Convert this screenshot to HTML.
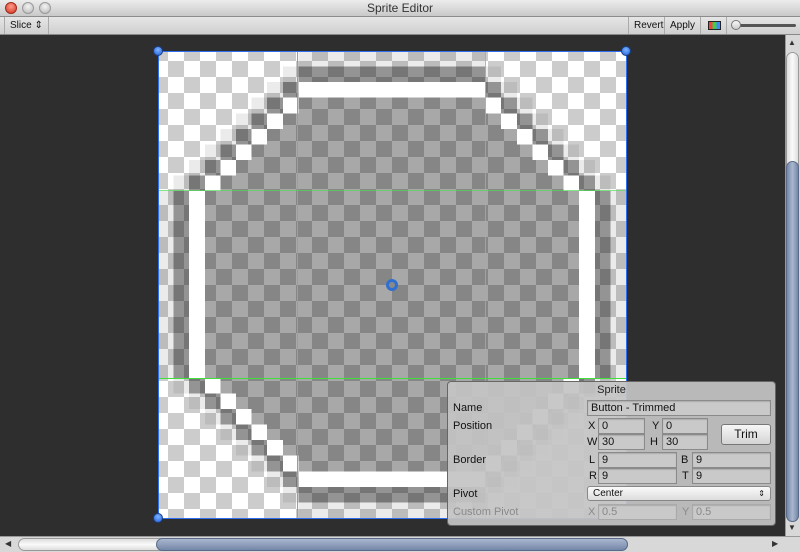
<!DOCTYPE html>
<html><head><meta charset="utf-8"><style>
*{margin:0;padding:0;box-sizing:border-box}
body{width:800px;height:552px;overflow:hidden;background:#2e2e2e;font-family:"Liberation Sans",sans-serif;position:relative}
.abs{position:absolute}
#title{left:0;top:0;width:800px;height:17px;background:linear-gradient(#ececec,#c9c9c9);border-bottom:1px solid #8c8c8c;text-align:center;font-size:12px;line-height:17px;color:#333}
.dot{top:2px;width:12px;height:12px;border-radius:50%;background:radial-gradient(circle at 50% 35%,#f4f4f4,#b5b5b5);border:1px solid #999}
#tool{left:0;top:17px;width:800px;height:18px;background:linear-gradient(#e6e6e6,#cfcfcf);border-bottom:1px solid #888;font-size:10px;color:#111}
.tb{position:absolute;top:0;height:17px;line-height:17px;border-left:1px solid #aaa;padding:0 5px}
#spr{left:158px;top:51px;width:468px;height:467px;background:conic-gradient(#fff 25%,#ccc 0 50%,#fff 0 75%,#ccc 0);background-size:32px 32px;background-position:10px 10px}
.h{width:10px;height:10px;border-radius:50%;background:radial-gradient(circle at 50% 35%,#7fb4ff,#1e5fd8);border:1px solid #1a3f88}
#panel{left:447px;top:381px;width:329px;height:145px;background:rgba(196,196,196,.93);border:1px solid #666;border-radius:4px;font-size:11px;color:#111}
.f{position:absolute;height:16px;background:#c9c9c9;border:1px solid #8a8a8a;font-size:11px;line-height:14px;padding-left:3px;box-shadow:inset 0 1px 1px rgba(0,0,0,.15)}
.l{position:absolute;font-size:11px}
</style></head><body>
<div id="title" class="abs">Sprite Editor</div>
<div class="abs dot" style="left:5px;background:radial-gradient(circle at 50% 35%,#ff9a8a,#d0321e);border-color:#a02a1c"></div>
<div class="abs dot" style="left:22px"></div>
<div class="abs dot" style="left:39px"></div>
<div id="tool" class="abs">
<div class="tb" style="left:4px;border-right:1px solid #aaa">Slice ⇕</div>
<div class="tb" style="left:628px">Revert</div>
<div class="tb" style="left:664px">Apply</div>
<div class="tb" style="left:700px;width:27px;border-right:1px solid #aaa"><div style="position:absolute;left:7px;top:4px;width:13px;height:9px;border:1px solid #222;background:linear-gradient(90deg,#e44 0 33%,#4c4 33% 66%,#48f 66%)"></div></div>
<div style="position:absolute;left:738px;top:7px;width:58px;height:3px;background:#555;border-radius:2px"></div>
<div style="position:absolute;left:731px;top:3px;width:10px;height:10px;border-radius:50%;background:linear-gradient(#fafafa,#ccc);border:1px solid #777"></div>
</div>
<div id="spr" class="abs"><svg id="sv" width="468" height="467" viewBox="0 0 30 30" preserveAspectRatio="none" shape-rendering="crispEdges" style="position:absolute;left:0;top:0"></svg></div>
<div class="abs" style="left:158px;top:190px;width:468px;height:1px;background:rgba(80,220,80,.7)"></div>
<div class="abs" style="left:158px;top:378px;width:468px;height:1px;background:#3de03d"></div>
<div class="abs" style="left:297px;top:51px;width:1px;height:467px;background:#3de03d"></div>
<div class="abs" style="left:485px;top:51px;width:1px;height:467px;background:rgba(80,230,80,.8)"></div>
<div class="abs" style="left:158px;top:51px;width:469px;height:468px;border:1px solid #2f6df0"></div>
<div class="abs h" style="left:153px;top:46px"></div>
<div class="abs h" style="left:621px;top:46px"></div>
<div class="abs h" style="left:153px;top:513px"></div>
<div class="abs" style="left:386px;top:279px;width:12px;height:12px;border-radius:50%;border:3px solid #2f6fcf;background:#8a8a8a"></div>
<div id="panel" class="abs">
<div style="text-align:center;line-height:16px;color:#222">Sprite</div>
<div class="l" style="left:5px;top:20px">Name</div>
<div class="f" style="left:139px;top:18px;width:184px">Button - Trimmed</div>
<div class="l" style="left:5px;top:38px">Position</div>
<div class="l" style="left:140px;top:38px">X</div><div class="f" style="left:150px;top:36px;width:47px">0</div>
<div class="l" style="left:204px;top:38px">Y</div><div class="f" style="left:214px;top:36px;width:46px">0</div>
<div class="l" style="left:139px;top:54px">W</div><div class="f" style="left:150px;top:52px;width:47px">30</div>
<div class="l" style="left:202px;top:54px">H</div><div class="f" style="left:214px;top:52px;width:46px">30</div>
<div style="position:absolute;left:273px;top:42px;width:50px;height:21px;border:1px solid #777;border-radius:3px;background:linear-gradient(#f7f7f7,#d4d4d4);text-align:center;line-height:19px;font-size:12px">Trim</div>
<div class="l" style="left:5px;top:72px">Border</div>
<div class="l" style="left:141px;top:72px">L</div><div class="f" style="left:150px;top:70px;width:79px">9</div>
<div class="l" style="left:233px;top:72px">B</div><div class="f" style="left:244px;top:70px;width:79px">9</div>
<div class="l" style="left:141px;top:88px">R</div><div class="f" style="left:150px;top:86px;width:79px">9</div>
<div class="l" style="left:234px;top:88px">T</div><div class="f" style="left:244px;top:86px;width:79px">9</div>
<div class="l" style="left:5px;top:106px">Pivot</div>
<div style="position:absolute;left:139px;top:104px;width:184px;height:15px;border:1px solid #888;border-radius:3px;background:linear-gradient(#fafafa,#dcdcdc);font-size:10px;line-height:13px;padding-left:5px">Center<span style="position:absolute;right:5px;font-size:8px">⇕</span></div>
<div class="l" style="left:5px;top:124px;color:#8a8a8a">Custom Pivot</div>
<div class="l" style="left:140px;top:124px;color:#8a8a8a">X</div><div class="f" style="left:150px;top:122px;width:79px;color:#888;border-color:#aaa">0.5</div>
<div class="l" style="left:234px;top:124px;color:#8a8a8a">Y</div><div class="f" style="left:244px;top:122px;width:79px;color:#888;border-color:#aaa">0.5</div>
</div>
<div class="abs" style="left:785px;top:35px;width:15px;height:502px;background:#d8d8d8;border-left:1px solid #999"></div>
<div class="abs" style="left:788px;top:38px;font-size:8px;color:#333">▲</div>
<div class="abs" style="left:786px;top:52px;width:13px;height:470px;border-radius:7px;background:linear-gradient(90deg,#ddd,#fafafa,#ddd);border:1px solid #999"></div>
<div class="abs" style="left:786px;top:161px;width:13px;height:361px;border-radius:7px;background:linear-gradient(90deg,#7587a8,#a9b7cf,#7587a8);border:1px solid #5a6a88"></div>
<div class="abs" style="left:788px;top:523px;font-size:8px;color:#333">▼</div>
<div class="abs" style="left:0;top:536px;width:800px;height:16px;background:#d8d8d8;border-top:1px solid #999"></div>
<div class="abs" style="left:5px;top:539px;font-size:8px;color:#333">◀</div>
<div class="abs" style="left:18px;top:538px;width:610px;height:13px;border-radius:7px;background:linear-gradient(#ddd,#fafafa,#ddd);border:1px solid #999"></div>
<div class="abs" style="left:156px;top:538px;width:472px;height:13px;border-radius:7px;background:linear-gradient(#a9b7cf,#7587a8);border:1px solid #5a6a88"></div>
<div class="abs" style="left:772px;top:539px;font-size:8px;color:#333">▶</div>
<script>
var P={w:'',f:'',d:'',l:''};
for(var r=0;r<30;r++)for(var c=0;c<30;c++){
var dx=Math.min(c,29-c),dy=Math.min(r,29-r),t=dx+dy,k=null;
if((dx==2&&dy>=9)||(dy==2&&dx>=9)||(t==11&&dx>=2&&dy>=2))k='w';
else if(dx>2&&dy>2&&t>11)k='f';
else if((dx==1&&dy>=9)||(dy==1&&dx>=9)||(t==10&&dx>=1&&dy>=1))k='d';
else if((dx==0&&dy>=9)||(dy==0&&dx>=9)||(t==9))k='l';
if(k)P[k]+='M'+c+' '+r+'h1v1h-1z';
}
document.getElementById('sv').innerHTML=
'<path d="'+P.f+'" fill="rgba(0,0,0,.34)"/>'+
'<path d="'+P.d+'" fill="rgba(0,0,0,.42)"/>'+
'<path d="'+P.l+'" fill="rgba(0,0,0,.08)"/>'+
'<path d="'+P.w+'" fill="#fff"/>';
</script>
</body></html>
